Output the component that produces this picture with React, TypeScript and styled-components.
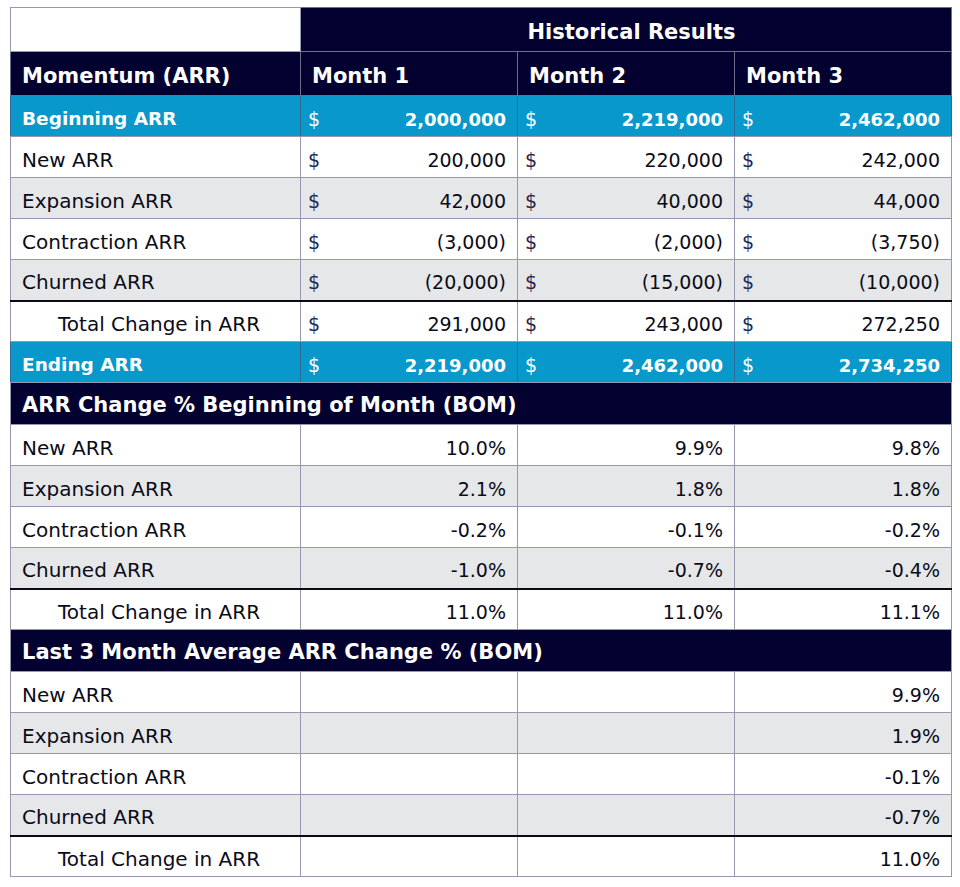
import React from "react";
import styled, { createGlobalStyle, css } from "styled-components";

const Global = createGlobalStyle`
  html, body { margin: 0; padding: 0; background: #ffffff; }
  body { font-family: "DejaVu Sans", "Liberation Sans", sans-serif; color: #0b0b18; }
`;

const NAVY = "#03012f";
const BLUE = "#0898cb";
const GRAY = "#e6e7e9";
const LINE = "#9896b0";

type Tone = "blue" | "white" | "gray";

const Page = styled.div`
  padding: 7px 0 0 10px;
`;

const Table = styled.table`
  border-collapse: collapse;
  table-layout: fixed;
  width: 941px;
  border: 1px solid ${LINE};
`;

const HeadRow = styled.tr`
  height: 44px;
`;

const SectionRow = styled.tr`
  height: 42px;
`;

const BlankCell = styled.td`
  background: #ffffff;
  border: 1px solid ${LINE};
`;

const HeadCell = styled.th<{ $align?: "left" | "center" }>`
  background: ${NAVY};
  color: #ffffff;
  font-weight: 700;
  font-size: 21px;
  text-align: ${(p) => p.$align ?? "left"};
  padding: 5px 0 0 11px;
  vertical-align: middle;
  border: 1px solid #6f6d8c;
  white-space: nowrap;
`;

const SectionCell = styled.td`
  background: ${NAVY};
  color: #ffffff;
  font-weight: 700;
  font-size: 21px;
  padding: 3px 0 0 11px;
  vertical-align: middle;
  border: 1px solid ${LINE};
  white-space: nowrap;
`;

const Row = styled.tr<{ $tone: Tone; $total?: boolean }>`
  height: 41px;
  background: ${(p) => (p.$tone === "blue" ? BLUE : p.$tone === "gray" ? GRAY : "#ffffff")};
  color: ${(p) => (p.$tone === "blue" ? "#ffffff" : "#0b0b18")};
  ${(p) =>
    p.$total &&
    css`
      border-top: 2px solid #0a0a14;
    `}
`;

const Cell = styled.td<{ $tone: Tone }>`
  border-left: 1px solid ${(p) => (p.$tone === "blue" ? "#2f6d98" : LINE)};
  border-right: 1px solid ${(p) => (p.$tone === "blue" ? "#2f6d98" : LINE)};
  border-bottom: 1px solid ${LINE};
  padding: 5px 11px 0 11px;
  vertical-align: middle;
  white-space: nowrap;
  font-size: ${(p) => (p.$tone === "blue" ? "18px" : "19px")};
  font-weight: ${(p) => (p.$tone === "blue" ? 700 : 400)};
`;

const LabelCell = styled(Cell)<{ $indent?: boolean }>`
  font-size: ${(p) => (p.$tone === "blue" ? "18.5px" : "20px")};
  padding-left: ${(p) => (p.$indent ? "47px" : "11px")};
`;

const ValueCell = styled(Cell)`
  text-align: right;
`;

const Money = styled.div`
  display: flex;
  justify-content: space-between;
  align-items: baseline;
`;

const Dollar = styled.span<{ $tone: Tone }>`
  font-weight: 400;
  font-size: 19px;
  margin-left: -4px;
  color: ${(p) => (p.$tone === "blue" ? "#ffffff" : "#26264f")};
`;

type DataRow = { label: string; tone: Tone; values: string[]; total?: boolean };

const momentum: DataRow[] = [
  { label: "Beginning ARR", tone: "blue", values: ["2,000,000", "2,219,000", "2,462,000"] },
  { label: "New ARR", tone: "white", values: ["200,000", "220,000", "242,000"] },
  { label: "Expansion ARR", tone: "gray", values: ["42,000", "40,000", "44,000"] },
  { label: "Contraction ARR", tone: "white", values: ["(3,000)", "(2,000)", "(3,750)"] },
  { label: "Churned ARR", tone: "gray", values: ["(20,000)", "(15,000)", "(10,000)"] },
  { label: "Total Change in ARR", tone: "white", values: ["291,000", "243,000", "272,250"], total: true },
  { label: "Ending ARR", tone: "blue", values: ["2,219,000", "2,462,000", "2,734,250"] },
];

const bom: DataRow[] = [
  { label: "New ARR", tone: "white", values: ["10.0%", "9.9%", "9.8%"] },
  { label: "Expansion ARR", tone: "gray", values: ["2.1%", "1.8%", "1.8%"] },
  { label: "Contraction ARR", tone: "white", values: ["-0.2%", "-0.1%", "-0.2%"] },
  { label: "Churned ARR", tone: "gray", values: ["-1.0%", "-0.7%", "-0.4%"] },
  { label: "Total Change in ARR", tone: "white", values: ["11.0%", "11.0%", "11.1%"], total: true },
];

const avg: DataRow[] = [
  { label: "New ARR", tone: "white", values: ["", "", "9.9%"] },
  { label: "Expansion ARR", tone: "gray", values: ["", "", "1.9%"] },
  { label: "Contraction ARR", tone: "white", values: ["", "", "-0.1%"] },
  { label: "Churned ARR", tone: "gray", values: ["", "", "-0.7%"] },
  { label: "Total Change in ARR", tone: "white", values: ["", "", "11.0%"], total: true },
];

const PctRows: React.FC<{ rows: DataRow[] }> = ({ rows }) => (
  <>
    {rows.map((r, i) => (
      <Row key={i} $tone={r.tone} $total={r.total}>
        <LabelCell $tone={r.tone} $indent={r.total}>
          {r.label}
        </LabelCell>
        {r.values.map((v, j) => (
          <ValueCell key={j} $tone={r.tone}>
            {v}
          </ValueCell>
        ))}
      </Row>
    ))}
  </>
);

export default function App() {
  return (
    <>
      <Global />
      <Page>
        <Table>
          <colgroup>
            <col style={{ width: 290 }} />
            <col style={{ width: 217 }} />
            <col style={{ width: 217 }} />
            <col style={{ width: 217 }} />
          </colgroup>
          <thead>
            <HeadRow>
              <BlankCell />
              <HeadCell colSpan={3} $align="center">
                Historical Results
              </HeadCell>
            </HeadRow>
            <HeadRow>
              <HeadCell>Momentum (ARR)</HeadCell>
              <HeadCell>Month 1</HeadCell>
              <HeadCell>Month 2</HeadCell>
              <HeadCell>Month 3</HeadCell>
            </HeadRow>
          </thead>
          <tbody>
            {momentum.map((r, i) => (
              <Row key={i} $tone={r.tone} $total={r.total}>
                <LabelCell $tone={r.tone} $indent={r.total}>
                  {r.label}
                </LabelCell>
                {r.values.map((v, j) => (
                  <Cell key={j} $tone={r.tone}>
                    <Money>
                      <Dollar $tone={r.tone}>$</Dollar>
                      <span>{v}</span>
                    </Money>
                  </Cell>
                ))}
              </Row>
            ))}
            <SectionRow>
              <SectionCell colSpan={4}>ARR Change % Beginning of Month (BOM)</SectionCell>
            </SectionRow>
            <PctRows rows={bom} />
            <SectionRow>
              <SectionCell colSpan={4}>Last 3 Month Average ARR Change % (BOM)</SectionCell>
            </SectionRow>
            <PctRows rows={avg} />
          </tbody>
        </Table>
      </Page>
    </>
  );
}
